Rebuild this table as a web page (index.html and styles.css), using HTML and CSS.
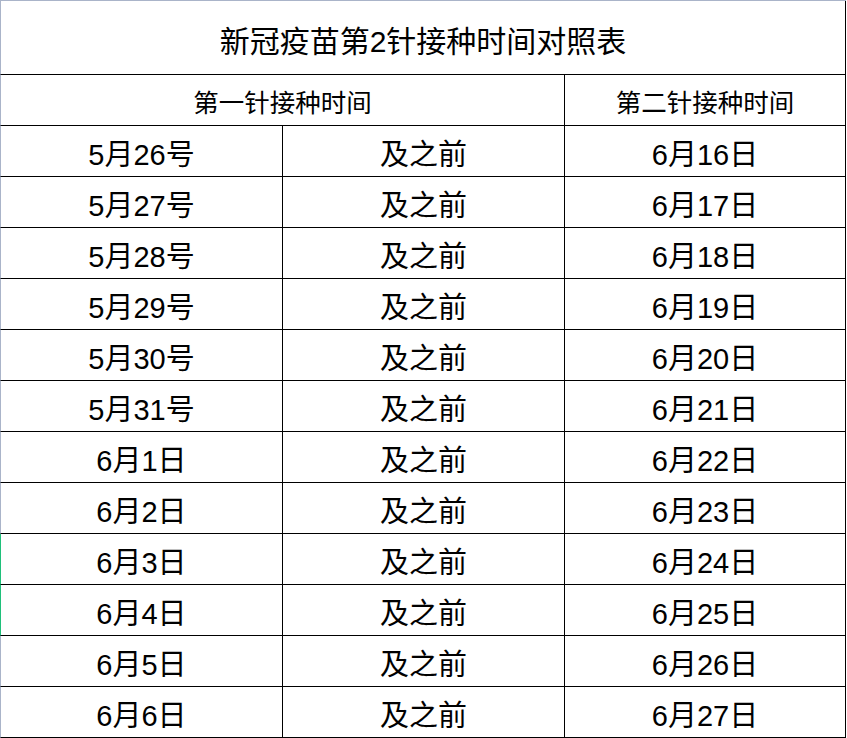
FILE: index.html
```html
<!DOCTYPE html>
<html lang="zh-CN">
<head>
<meta charset="utf-8">
<title>新冠疫苗第2针接种时间对照表</title>
<link rel="stylesheet" href="styles.css">
</head>
<body>
<div class="sheet">
  <div class="cell title first">新冠疫苗第2针接种时间对照表</div>
  <div class="cell head span2 first">第一针接种时间</div>
  <div class="cell head">第二针接种时间</div>

  <div class="cell data first">5月26号</div><div class="cell data">及之前</div><div class="cell data">6月16日</div>
  <div class="cell data first">5月27号</div><div class="cell data">及之前</div><div class="cell data">6月17日</div>
  <div class="cell data first">5月28号</div><div class="cell data">及之前</div><div class="cell data">6月18日</div>
  <div class="cell data first">5月29号</div><div class="cell data">及之前</div><div class="cell data">6月19日</div>
  <div class="cell data first">5月30号</div><div class="cell data">及之前</div><div class="cell data">6月20日</div>
  <div class="cell data first">5月31号</div><div class="cell data">及之前</div><div class="cell data">6月21日</div>
  <div class="cell data first">6月1日</div><div class="cell data">及之前</div><div class="cell data">6月22日</div>
  <div class="cell data first">6月2日</div><div class="cell data">及之前</div><div class="cell data">6月23日</div>
  <div class="cell data first mark">6月3日</div><div class="cell data">及之前</div><div class="cell data">6月24日</div>
  <div class="cell data first mark">6月4日</div><div class="cell data">及之前</div><div class="cell data">6月25日</div>
  <div class="cell data first">6月5日</div><div class="cell data">及之前</div><div class="cell data">6月26日</div>
  <div class="cell data first">6月6日</div><div class="cell data">及之前</div><div class="cell data">6月27日</div>
</div>
</body>
</html>
```

FILE: styles.css
```css
html, body {
  margin: 0;
  padding: 0;
  background: #ffffff;
}

.sheet {
  display: grid;
  grid-template-columns: 283px 282px 281px;
  grid-template-rows: 74px;
  grid-auto-rows: 51px;
  width: 846px;
  border-top: 1px solid #aab4c9;
  font-family: "Liberation Sans", "Noto Sans CJK SC", sans-serif;
  color: #000000;
}

.cell {
  box-sizing: border-box;
  display: flex;
  align-items: center;
  justify-content: center;
  border-right: 1px solid #000000;
  border-bottom: 1px solid #000000;
  white-space: nowrap;
}

.first {
  border-left: 1px solid #aab4c9;
}

.first.mark {
  border-left-color: #1fc07a;
}

.title {
  grid-column: 1 / 4;
  font-size: 30px;
  padding-top: 2px;
}

.head {
  font-size: 25.5px;
  padding-top: 0;
}

.span2 {
  grid-column: 1 / 3;
}

.data {
  font-size: 29px;
  padding-top: 2px;
}
```
